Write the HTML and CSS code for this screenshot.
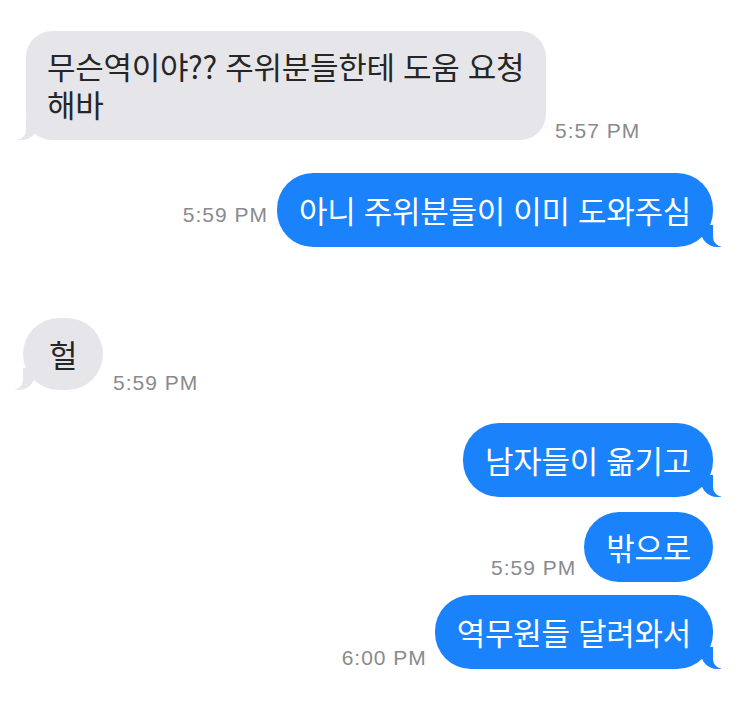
FILE: index.html
```html
<!DOCTYPE html>
<html lang="ko">
<head>
<meta charset="utf-8">
<link rel="stylesheet" href="styles.css">
</head>
<body>
<div class="chat">
  <div class="row in r1">
    <div class="bubble recv wide">무슨역이야?? 주위분들한테 도움 요청 해바</div>
    <span class="time t1">5:57 PM</span>
  </div>
  <div class="row out r2">
    <span class="time t2">5:59 PM</span>
    <div class="bubble sent">아니 주위분들이 이미 도와주심</div>
  </div>
  <div class="row in r3">
    <div class="bubble recv solo">헐</div>
    <span class="time t3">5:59 PM</span>
  </div>
  <div class="row out r4">
    <div class="bubble sent">남자들이 옮기고</div>
  </div>
  <div class="row out r5">
    <span class="time t5">5:59 PM</span>
    <div class="bubble sent short">밖으로</div>
  </div>
  <div class="row out r6">
    <span class="time t6">6:00 PM</span>
    <div class="bubble sent">역무원들 달려와서</div>
  </div>
</div>
</body>
</html>
```
FILE: styles.css
```css
html, body {
  margin: 0;
  padding: 0;
  background: #ffffff;
}
body {
  width: 738px;
  height: 714px;
  overflow: hidden;
  font-family: "Noto Sans CJK KR", "Noto Sans", sans-serif;
}
.chat {
  display: flex;
  flex-direction: column;
  padding: 31px 25px 0 26px;
}
.row {
  display: flex;
  align-items: flex-end;
}
.row.out {
  justify-content: flex-end;
}
.r2 { margin-top: 33px; }
.r3 { margin-top: 71px; margin-left: -3px; }
.r4 { margin-top: 33px; }
.r5 { margin-top: 15px; }
.r6 { margin-top: 13px; }

.bubble {
  position: relative;
  box-sizing: border-box;
  padding: 19px 22px;
  border-radius: 36px;
  font-size: 31px;
  line-height: 36px;
  letter-spacing: -0.3px;
}
.bubble.wide {
  width: 520px;
  border-radius: 26px;
  padding: 16px 20px 17px 21px;
  line-height: 38px;
}
.bubble.solo {
  width: 80px;
  height: 72px;
  padding: 18px 0;
  text-align: center;
  border-radius: 36px;
}
.bubble.short {
  height: 70px;
  padding-top: 17px;
}
.recv {
  background: #e6e6ea;
  color: #262626;
}
.sent {
  background: #1a82fb;
  color: #ffffff;
  white-space: nowrap;
}
.recv::before {
  content: "";
  position: absolute;
  bottom: 0;
  left: -8px;
  width: 20px;
  height: 22px;
  background: #e6e6ea;
  border-bottom-right-radius: 16px;
}
.recv::after {
  content: "";
  position: absolute;
  bottom: 0;
  left: -10px;
  width: 10px;
  height: 22px;
  background: #ffffff;
  border-bottom-right-radius: 10px;
}
.sent::before {
  content: "";
  position: absolute;
  bottom: 0;
  right: -8px;
  width: 20px;
  height: 22px;
  background: #1a82fb;
  border-bottom-left-radius: 16px;
}
.sent::after {
  content: "";
  position: absolute;
  bottom: 0;
  right: -10px;
  width: 10px;
  height: 22px;
  background: #ffffff;
  border-bottom-left-radius: 10px;
}
.r5 .sent::before, .r5 .sent::after { display: none; }

.time {
  font-family: "Liberation Sans", Arial, sans-serif;
  font-size: 21px;
  letter-spacing: 1px;
  line-height: 22px;
  color: #8a8a8e;
  white-space: nowrap;
}
.t1 { margin-left: 9px; margin-bottom: -2px; }
.t2 { margin-right: 9px; margin-bottom: 21px; }
.t3 { margin-left: 10px; margin-bottom: -4px; }
.t5 { margin-right: 8px; margin-bottom: 3px; }
.t6 { margin-right: 8px; margin-bottom: 0; }
```
